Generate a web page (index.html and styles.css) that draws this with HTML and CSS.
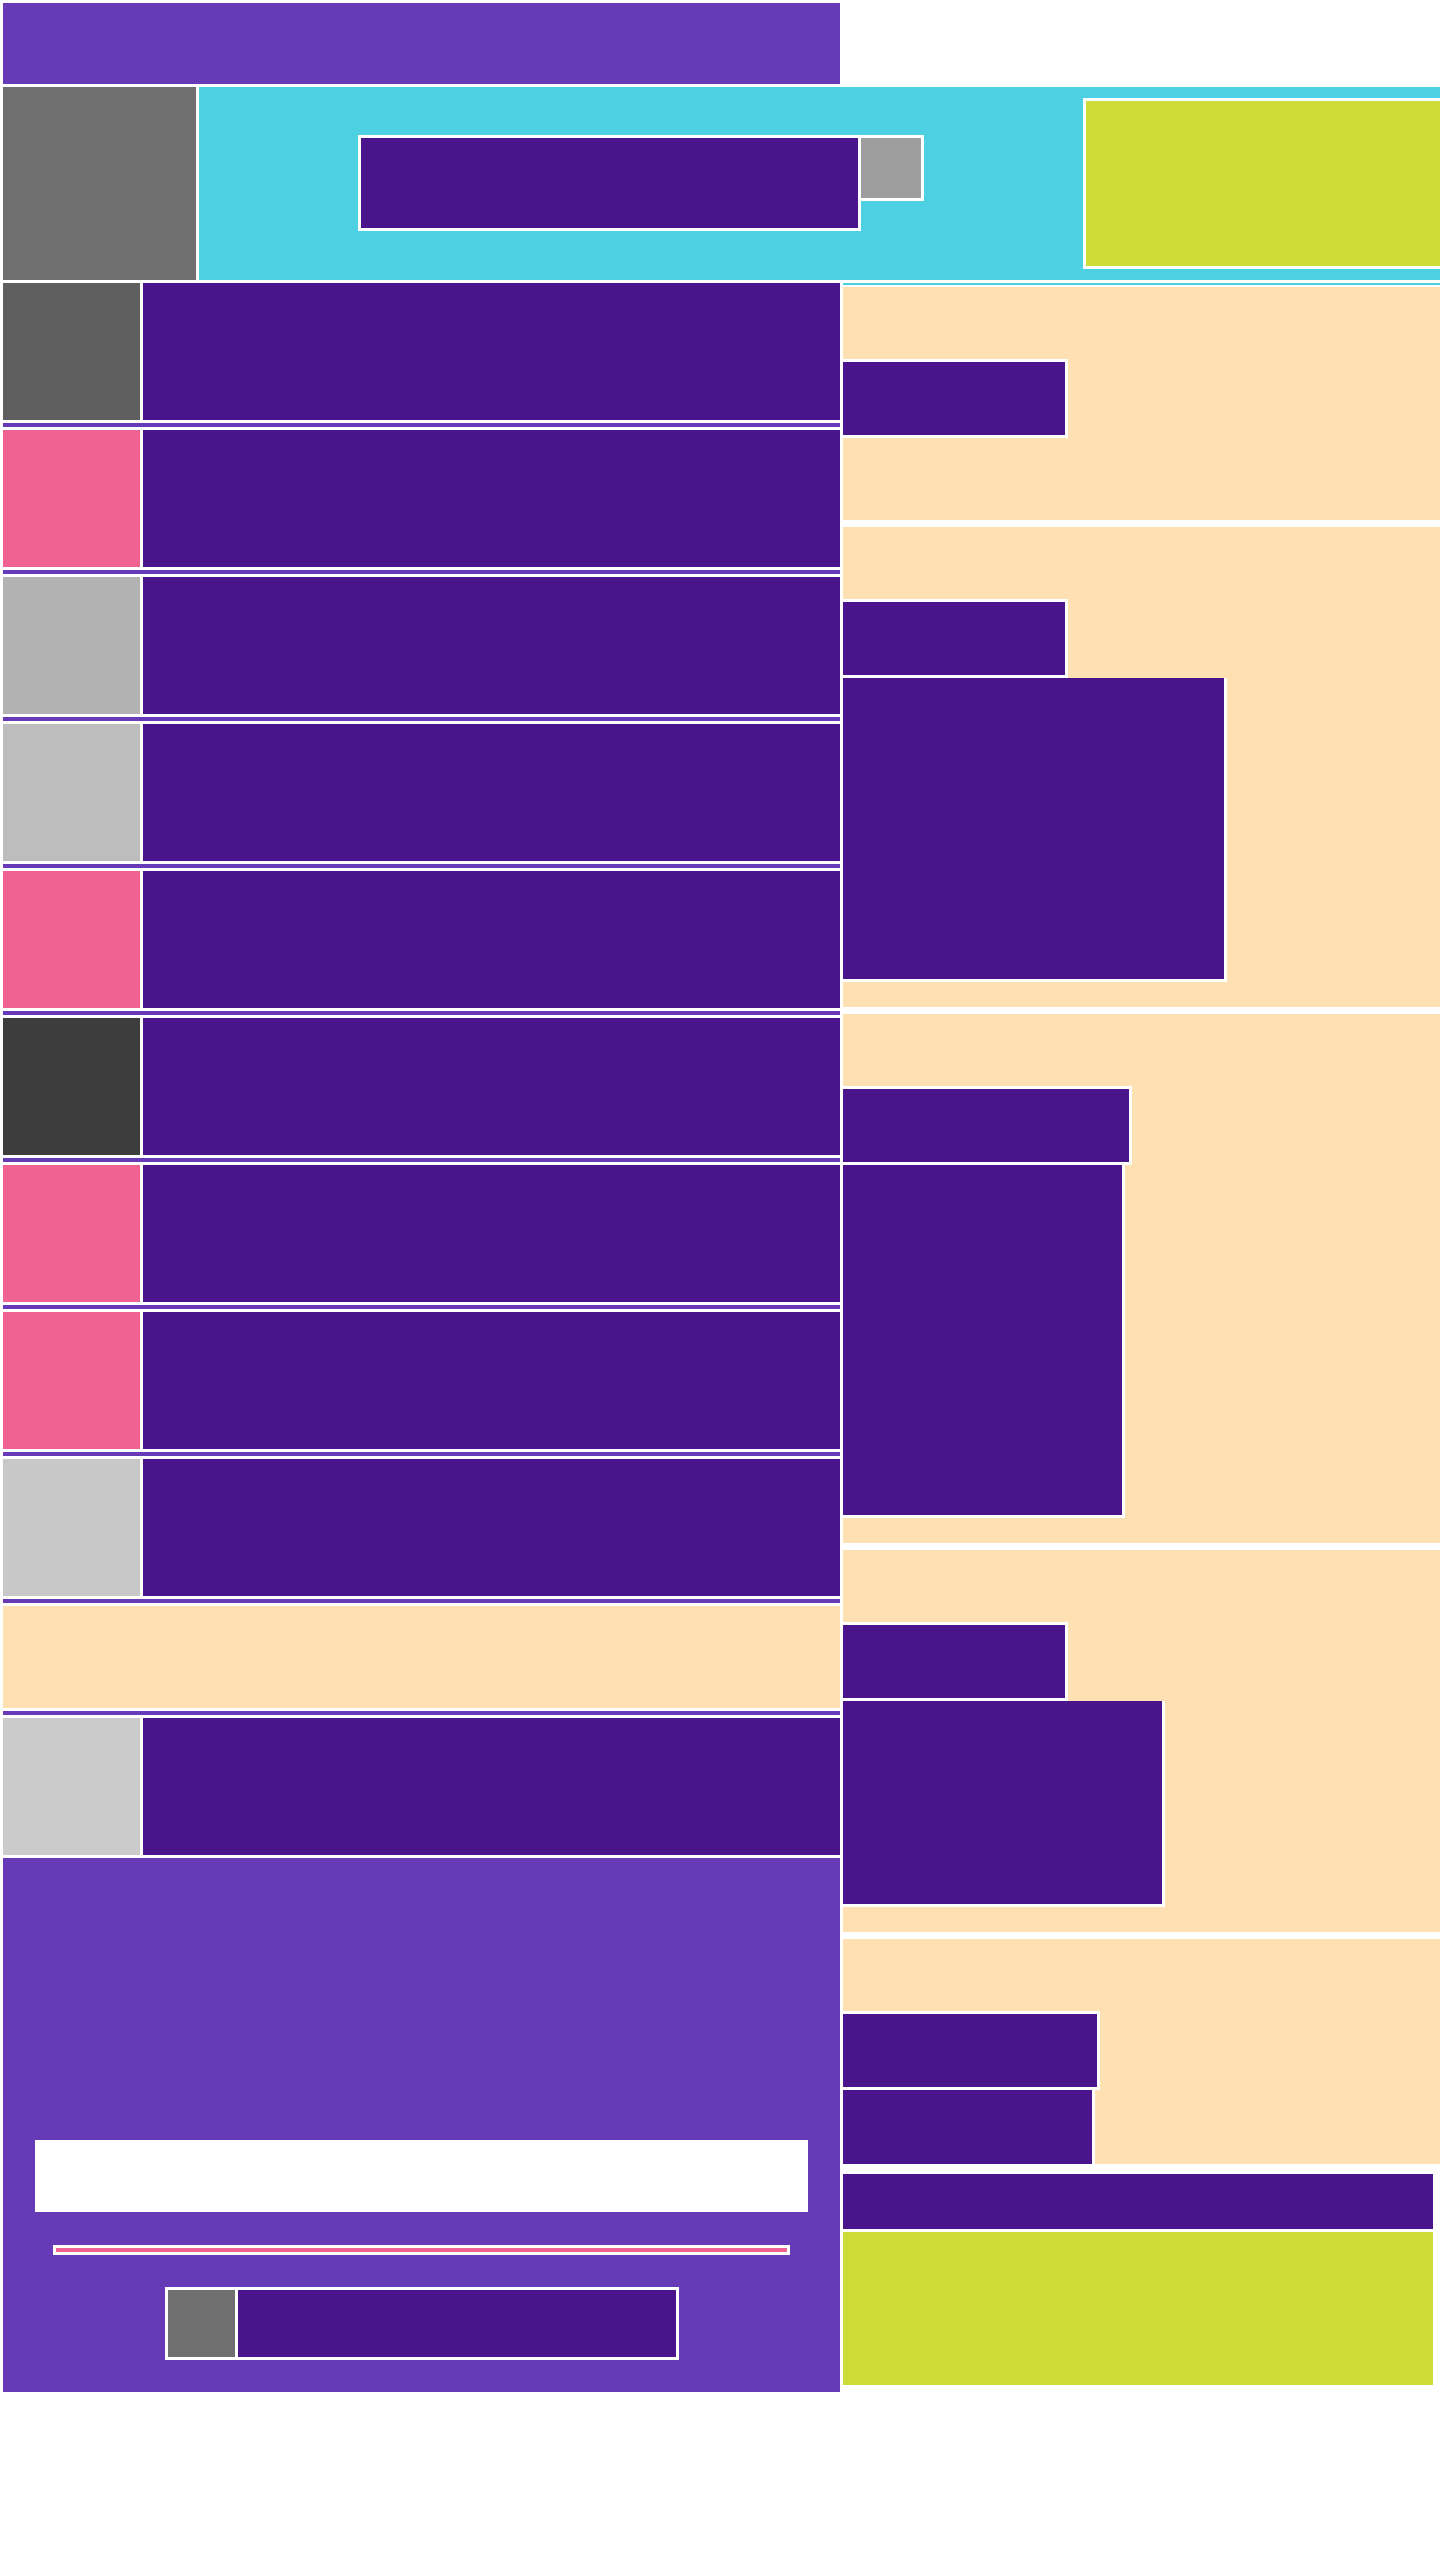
FILE: index.html
```html
<!DOCTYPE html>
<html lang="en">
<head>
<meta charset="utf-8">
<title>Feed</title>
<link rel="stylesheet" href="styles.css">
</head>
<body>
<div class="page">
  <header class="topbar"></header>

  <section class="hero">
    <div class="hero-thumb"></div>
    <div class="hero-main">
      <div class="search">
        <div class="search-input"></div>
        <div class="search-btn"></div>
      </div>
      <div class="hero-promo"></div>
    </div>
  </section>

  <div class="main">
    <div class="feed">
      <div class="row"><div class="thumb t-dark"></div><div class="row-body"></div></div>
      <div class="sep"></div>
      <div class="row"><div class="thumb t-pink"></div><div class="row-body"></div></div>
      <div class="sep"></div>
      <div class="row"><div class="thumb t-mid"></div><div class="row-body"></div></div>
      <div class="sep"></div>
      <div class="row"><div class="thumb t-light"></div><div class="row-body"></div></div>
      <div class="sep"></div>
      <div class="row"><div class="thumb t-pink"></div><div class="row-body"></div></div>
      <div class="sep"></div>
      <div class="row"><div class="thumb t-black"></div><div class="row-body"></div></div>
      <div class="sep"></div>
      <div class="row"><div class="thumb t-pink"></div><div class="row-body"></div></div>
      <div class="sep"></div>
      <div class="row"><div class="thumb t-pink"></div><div class="row-body"></div></div>
      <div class="sep"></div>
      <div class="row"><div class="thumb t-pale"></div><div class="row-body"></div></div>
      <div class="sep"></div>
      <div class="notice"></div>
      <div class="sep"></div>
      <div class="row"><div class="thumb t-paler"></div><div class="row-body"></div></div>

      <footer class="feed-footer">
        <div class="subscribe"></div>
        <div class="progress"></div>
        <div class="author">
          <div class="author-avatar"></div>
          <div class="author-info"></div>
        </div>
      </footer>
    </div>

    <aside class="side">
      <div class="side-rule"></div>

      <div class="card card-1">
        <div class="card-btn w-225"></div>
      </div>

      <div class="card card-2">
        <div class="card-btn w-225"></div>
        <div class="card-media media-2"></div>
      </div>

      <div class="card card-3">
        <div class="card-btn w-289"></div>
        <div class="card-media media-3"></div>
      </div>

      <div class="card card-4">
        <div class="card-btn w-225"></div>
        <div class="card-media media-4"></div>
      </div>

      <div class="card card-5">
        <div class="card-btn w-257"></div>
        <div class="card-btn2"></div>
      </div>

      <div class="side-bar"></div>
      <div class="side-lime"></div>
    </aside>
  </div>
</div>
</body>
</html>
```

FILE: styles.css
```css
* { box-sizing: border-box; }

body {
  margin: 0;
  background: #ffffff;
  font-family: "Liberation Sans", Arial, sans-serif;
}

.page {
  display: flex;
  flex-direction: column;
  gap: 3px;
  padding: 3px 0 0 3px;
}

.topbar {
  width: 837px;
  height: 81px;
  background: #673AB7;
}

/* hero */
.hero {
  display: flex;
  gap: 3px;
  height: 193px;
}
.hero-thumb {
  flex: none;
  width: 193px;
  background: #6F6F6F;
}
.hero-main {
  flex: 1;
  display: flex;
  align-items: flex-start;
  padding-left: 159px;
  background: #4DD0E1;
  overflow: hidden;
}
.search {
  display: flex;
  align-items: flex-start;
  flex: none;
  margin-top: 48px;
}
.search-input {
  width: 503px;
  height: 96px;
  background: #4A148C;
  border: 3px solid #fff;
}
.search-btn {
  width: 63px;
  height: 66px;
  background: #9E9E9E;
  border: 3px solid #fff;
  border-left: 0;
}
.hero-promo {
  flex: none;
  margin-left: 159px;
  margin-top: 11px;
  width: 357px;
  height: 171px;
  background: #CDDC39;
  border: 3px solid #fff;
  border-right: 0;
}

/* main columns */
.main {
  display: flex;
  gap: 3px;
  align-items: flex-start;
}
.feed {
  flex: none;
  width: 837px;
  display: flex;
  flex-direction: column;
  gap: 3px;
}
.row {
  display: flex;
  gap: 3px;
  height: 137px;
}
.thumb {
  flex: none;
  width: 137px;
}
.t-dark { background: #5F5F5F; }
.t-pink { background: #F06292; }
.t-mid { background: #B2B2B2; }
.t-light { background: #BDBDBD; }
.t-black { background: #3D3D3D; }
.t-pale { background: #C8C8C8; }
.t-paler { background: #CBCBCB; }
.row-body {
  flex: 1;
  background: #4A148C;
}
.sep {
  height: 4px;
  background: #673AB7;
}
.notice {
  height: 102px;
  background: #FFE0B2;
}

/* footer */
.feed-footer {
  height: 534px;
  background: #673AB7;
  display: flex;
  flex-direction: column;
  align-items: center;
  justify-content: flex-end;
  padding: 0 32px 32px;
}
.subscribe {
  align-self: stretch;
  height: 72px;
  background: #ffffff;
}
.progress {
  margin-top: 33px;
  width: 737px;
  height: 10px;
  background: #F06292;
  border: 3px solid #fff;
}
.author {
  margin-top: 32px;
  width: 514px;
  height: 73px;
  display: flex;
  gap: 3px;
  background: #fff;
  border: 3px solid #fff;
}
.author-avatar {
  flex: none;
  width: 67px;
  background: #6F6F6F;
}
.author-info {
  flex: 1;
  background: #4A148C;
}

/* sidebar */
.side {
  flex: 1;
  display: flex;
  flex-direction: column;
}
.side-rule {
  height: 2px;
  margin-bottom: 2px;
  background: #4DD0E1;
}
.card {
  display: flex;
  flex-direction: column;
  align-items: flex-start;
  padding-top: 72px;
  margin-bottom: 7px;
  background: #FFE0B2;
}
.card-1 { padding-bottom: 82px; }
.card-2, .card-3, .card-4 { padding-bottom: 25px; }
.card-5 { margin-bottom: 10px; }

.card-btn {
  height: 79px;
  background: #4A148C;
  border: 3px solid #fff;
  border-left: 0;
}
.w-225 { width: 225px; }
.w-257 { width: 257px; }
.w-289 { width: 289px; }

.card-btn2 {
  width: 252px;
  height: 74px;
  background: #4A148C;
  border-right: 3px solid #fff;
}

.card-media {
  background: #4A148C;
  border: 3px solid #fff;
  border-left: 0;
  border-top: 0;
}
.media-2 { width: 384px; height: 304px; }
.media-3 { width: 282px; height: 353px; }
.media-4 { width: 322px; height: 206px; }

.side-bar {
  width: 590px;
  height: 55px;
  background: #4A148C;
}
.side-lime {
  margin-top: 3px;
  width: 590px;
  height: 153px;
  background: #CDDC39;
}
```
